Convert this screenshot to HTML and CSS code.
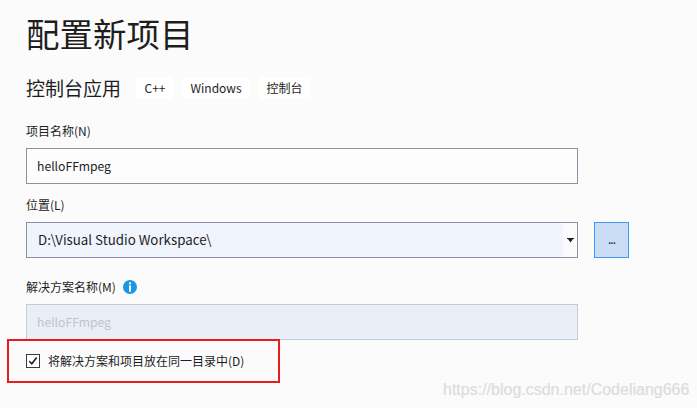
FILE: index.html
```html
<!DOCTYPE html>
<html lang="zh">
<head>
<meta charset="utf-8">
<link rel="stylesheet" href="styles.css">
</head>
<body>
<div class="page">
  <h1 class="title">配置新项目</h1>
  <div class="subtitle-row">
    <span class="subtitle">控制台应用</span>
    <span class="tag">C++</span>
    <span class="tag">Windows</span>
    <span class="tag">控制台</span>
  </div>

  <div class="label label-first">项目名称(N)</div>
  <div class="input name-input">helloFFmpeg</div>

  <div class="label">位置(L)</div>
  <div class="loc-row">
    <div class="input select">
      <span class="select-text">D:\Visual Studio Workspace\</span>
      <span class="select-btn"><svg width="7" height="5" viewBox="0 0 7 5"><path d="M0 0H7V1H6L3.5 4.5L1 1H0Z" fill="#1e1e1e"/></svg></span>
    </div>
    <div class="browse">...</div>
  </div>

  <div class="label label-info">解决方案名称(M)
    <svg class="info" width="14" height="14" viewBox="0 0 14 14"><circle cx="7" cy="7" r="7" fill="#1c97e3"/><rect x="6" y="2.3" width="2" height="2" rx="0.4" fill="#fff"/><rect x="6" y="5.4" width="2" height="6.2" fill="#fff"/></svg>
  </div>
  <div class="input name-input disabled">helloFFmpeg</div>

  <div class="check-box">
    <span class="checkbox"><svg width="10" height="10" viewBox="0 0 10 10"><path d="M1.3 5.2L3.8 7.8L8.7 1.6" fill="none" stroke="#1e1e1e" stroke-width="1.6"/></svg></span>
    <span class="check-label">将解决方案和项目放在同一目录中(D)</span>
  </div>
</div>
<div class="watermark">https://blog.csdn.net/Codeliang666</div>
</body>
</html>
```
FILE: styles.css
```css
html, body {
  margin: 0;
  padding: 0;
  background: #fbfbfb;
  width: 697px;
  height: 408px;
  overflow: hidden;
  position: relative;
  font-family: "Noto Sans CJK SC", sans-serif;
  color: #1e1e1e;
}
.page {
  padding: 11px 0 0 26px;
  width: 552px;
}
.title {
  margin: 0;
  font-family: "Noto Sans CJK SC", sans-serif;
  font-weight: 400;
  font-size: 33.5px;
  line-height: 44px;
  color: #1e1e1e;
}
.subtitle-row {
  margin-top: 22px;
  display: flex;
  align-items: center;
  height: 22px;
}
.subtitle {
  font-size: 19px;
  line-height: 22px;
  margin-right: 15px;
}
.tag {
  background: #ffffff;
  border-radius: 3px;
  height: 22px;
  line-height: 22px;
  font-size: 12px;
  padding: 0 8.5px;
  margin-right: 8px;
}
.label {
  font-size: 12px;
  line-height: 16px;
  margin-top: 13px;
  margin-bottom: 9px;
}
.label-first {
  margin-top: 24px;
}
.input {
  box-sizing: border-box;
  width: 552px;
  height: 36px;
  border: 1px solid #8a93a6;
  background: #fdfdfd;
  padding-left: 10px;
  font-size: 13.3px;
  line-height: 34px;
}
.name-input {
  font-size: 12.2px;
}
.loc-row {
  display: flex;
  align-items: flex-start;
  width: 610px;
}
.select {
  display: flex;
  background: #f0f4fc;
  padding-left: 0;
}
.select-text {
  flex: 1;
  padding-left: 11px;
}
.select-btn {
  width: 14px;
  background: #fbfbfb;
  display: flex;
  align-items: center;
  justify-content: center;
}
.browse {
  margin-left: 16px;
  box-sizing: border-box;
  width: 35px;
  height: 36px;
  border: 1px solid #3c9af5;
  background: #c9ddf4;
  text-align: center;
  font-size: 12px;
  line-height: 32px;
  letter-spacing: -1px;
}
.label-info {
  display: flex;
  align-items: center;
  margin-top: 21px;
}
.info {
  margin-left: 7px;
}
.disabled {
  background: #e9eef7;
  border-color: #c5ccd8;
  color: #c2c4c8;
}
.check-box {
  margin: -1px 0 0 -19px;
  box-sizing: border-box;
  width: 273px;
  height: 44px;
  border: 2px solid #e81c1c;
  display: flex;
  align-items: center;
  padding-left: 17px;
}
.checkbox {
  box-sizing: border-box;
  width: 14px;
  height: 14px;
  border: 1px solid #3b3b3b;
  background: #fff;
  display: flex;
  align-items: center;
  justify-content: center;
  margin-right: 8px;
}
.check-label {
  font-size: 12px;
  line-height: 16px;
}
.watermark {
  position: absolute;
  left: 443px;
  top: 381px;
  font-family: "Liberation Sans", sans-serif;
  font-size: 16px;
  color: #dcdcdc;
  text-shadow: 0 0 1px #eeeeee;
}
```
